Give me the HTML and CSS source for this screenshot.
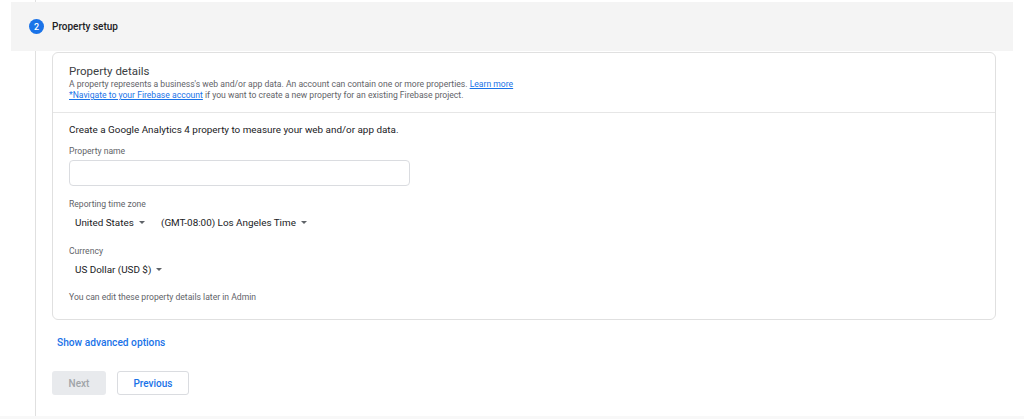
FILE: index.html
```html
<!DOCTYPE html>
<html lang="en">
<head>
    <meta charset="UTF-8">
    <title>Property setup</title>
    <link rel="stylesheet" href="styles.css">
</head>
<body>
    <div class="stepper">
        <div class="step-head">
            <span class="step-num">2</span>
            <span class="step-title">Property setup</span>
        </div>

        <div class="step-body">
            <div class="card">
                <div class="card-head">
                    <div class="card-title">Property details</div>
                    <p class="card-desc">A property represents a business's web and/or app data. An account can contain one or more properties. <a href="#">Learn more</a></p>
                    <p class="card-desc"><a href="#">*Navigate to your Firebase account</a> if you want to create a new property for an existing Firebase project.</p>
                </div>

                <div class="card-main">
                    <p class="intro">Create a Google Analytics 4 property to measure your web and/or app data.</p>

                    <label class="field-label" for="propName">Property name</label>
                    <input class="text-input" type="text" id="propName">

                    <div class="field-label tz-label">Reporting time zone</div>
                    <div class="select-row">
                        <span class="select country">United States <span class="caret"></span></span>
                        <span class="select">(GMT-08:00) Los Angeles Time <span class="caret"></span></span>
                    </div>

                    <div class="field-label cur-label">Currency</div>
                    <div class="select-row">
                        <span class="select">US Dollar (USD $) <span class="caret"></span></span>
                    </div>

                    <p class="hint">You can edit these property details later in Admin</p>
                </div>
            </div>

            <a class="advanced" href="#">Show advanced options</a>

            <div class="actions">
                <button class="btn btn-next" disabled>Next</button>
                <button class="btn btn-prev">Previous</button>
            </div>
        </div>
    </div>
    <div class="footer-strip"></div>
</body>
</html>
```

FILE: styles.css
```css
* {
    margin: 0;
    padding: 0;
    box-sizing: border-box;
}

body {
    background: #fff;
    font-family: Roboto, "Liberation Sans", sans-serif;
    color: #202124;
    height: 419px;
    overflow: hidden;
}

.stepper {
    position: relative;
    height: 416px;
    padding-top: 2px;
}

/* vertical connector line of the stepper */
.stepper::before {
    content: "";
    position: absolute;
    left: 35px;
    top: 0;
    bottom: 0;
    width: 1px;
    background: #e0e0e0;
}

.step-head {
    position: relative;
    margin-left: 11px;
    width: 1002px;
    height: 49px;
    background: #f4f4f4;
    display: flex;
    align-items: center;
    padding-left: 18px;
}

.step-num {
    position: relative;
    z-index: 1;
    width: 15px;
    height: 15px;
    border-radius: 50%;
    background: #1a73e8;
    color: #fff;
    font-size: 9px;
    font-weight: 500;
    display: flex;
    align-items: center;
    justify-content: center;
}

.step-title {
    margin-left: 8px;
    font-size: 10px;
    font-weight: 500;
    color: #202124;
}

.step-body {
    position: relative;
    padding-left: 52px;
    padding-top: 1px;
}

.card {
    width: 944px;
    border: 1px solid #e0e0e0;
    border-radius: 6px;
    background: #fff;
}

.card-head {
    padding: 11px 16px 11px;
    border-bottom: 1px solid #e6e6e6;
}

.card-title {
    font-size: 11.5px;
    line-height: 15px;
    color: #3c4043;
}

.card-desc {
    font-size: 8.6px;
    line-height: 11px;
    color: #5f6368;
}

.card-desc a {
    color: #1a73e8;
}

.card-main {
    padding: 9px 16px 16px;
}

.intro {
    font-size: 9.9px;
    line-height: 16px;
    color: #202124;
}

.field-label {
    display: block;
    font-size: 8.6px;
    line-height: 12px;
    color: #5f6368;
}

label.field-label {
    margin-top: 7px;
}

.text-input {
    display: block;
    width: 341px;
    height: 26px;
    margin-top: 3px;
    border: 1px solid #dadce0;
    border-radius: 4px;
    outline: none;
}

.tz-label {
    margin-top: 12px;
}

.cur-label {
    margin-top: 15px;
}

.select-row {
    display: flex;
    margin-top: 4px;
    padding-left: 6px;
    height: 16px;
    align-items: center;
}

.select {
    font-size: 9.9px;
    color: #202124;
    display: flex;
    align-items: center;
}

.country {
    width: 86px;
}

.caret {
    display: inline-block;
    margin-left: 5px;
    border-left: 3px solid transparent;
    border-right: 3px solid transparent;
    border-top: 3px solid #5f6368;
}

.hint {
    margin-top: 14px;
    font-size: 8.6px;
    line-height: 12px;
    color: #5f6368;
}

.advanced {
    display: inline-block;
    margin-top: 16px;
    margin-left: 5px;
    font-size: 10.2px;
    line-height: 14px;
    font-weight: 500;
    color: #1a73e8;
    text-decoration: none;
}

.actions {
    display: flex;
    gap: 11px;
    margin-top: 21px;
}

.btn {
    height: 24px;
    border-radius: 3px;
    font-family: Roboto, "Liberation Sans", sans-serif;
    font-size: 10px;
    font-weight: 500;
    background: #fff;
}

.btn-next {
    width: 54px;
    border: none;
    background: #e8eaed;
    color: #a0a4a8;
}

.btn-prev {
    width: 72px;
    border: 1px solid #dadce0;
    color: #1a73e8;
}

.footer-strip {
    height: 3px;
    background: #f8f8f8;
}
```
